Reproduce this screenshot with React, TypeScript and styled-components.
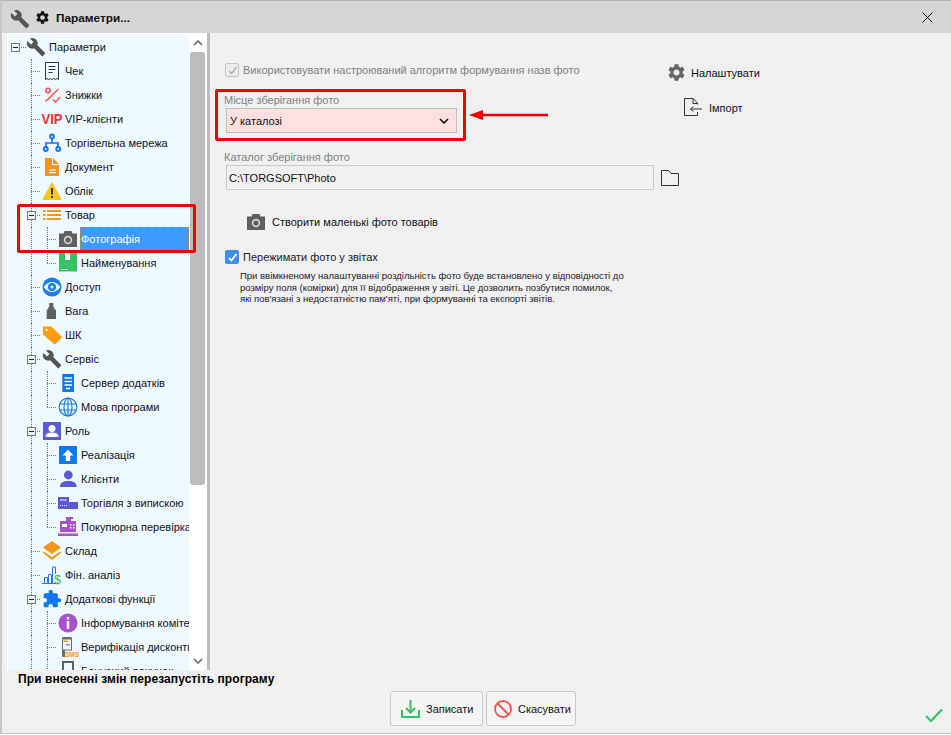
import React from "react";
import styled, { createGlobalStyle } from "styled-components";

const GlobalStyle = createGlobalStyle`
  html, body {
    margin: 0;
    padding: 0;
    background: #ffffff;
  }
  body {
    font-family: "Liberation Sans", Arial, sans-serif;
    font-size: 11px;
    color: #10101a;
  }
`;

const Window = styled.div`
  width: 951px;
  height: 734px;
  box-sizing: border-box;
  display: flex;
  flex-direction: column;
  background: #f0f0f0;
  border-top: 1px solid #b4b4b4;
  border-left: 2px solid #c8c8c8;
  border-bottom: 1px solid #c4c4c4;
`;

const TitleBar = styled.div`
  height: 32px;
  flex: none;
  box-sizing: border-box;
  display: flex;
  align-items: center;
  background: #d6d6d6;
  padding: 1px 18px 0 8px;
  font-weight: bold;
  font-size: 11.8px;
  color: #111;
`;

const TitleText = styled.span`
  margin-left: 7px;
  flex: 1;
`;

const TitleGap = styled.span`
  width: 6px;
`;

const WrenchMark = styled.svg`
  margin-top: 3px;
`;

const Body = styled.div`
  flex: 1;
  min-height: 0;
  display: flex;
`;

const TreePane = styled.div`
  width: 203px;
  margin-left: 5px;
  flex: none;
  display: flex;
  background: #ffffff;
  padding: 1px 0 0 1px;
  box-sizing: border-box;
  border-right: 3px solid #bcbcbc;
  position: relative;
`;

const TreeList = styled.div`
  flex: 1;
  min-width: 0;
  overflow: hidden;
  background: #eefaff;
  padding-top: 1px;
`;

const Row = styled.div<{ $level: number }>`
  height: 24px;
  display: flex;
  align-items: center;
  position: relative;
  white-space: nowrap;
  padding-left: ${(p) => [18, 34, 50][p.$level]}px;
`;

const VLine = styled.i<{ $x: number; $half?: boolean }>`
  position: absolute;
  left: ${(p) => p.$x}px;
  top: 0;
  height: ${(p) => (p.$half ? "12px" : "24px")};
  border-left: 1px dotted #777;
`;

const HLine = styled.i<{ $x: number }>`
  position: absolute;
  left: ${(p) => p.$x}px;
  top: 12px;
  width: 9px;
  border-top: 1px dotted #777;
`;

const Expander = styled.i<{ $x: number }>`
  position: absolute;
  left: ${(p) => p.$x}px;
  top: 8px;
  width: 9px;
  height: 9px;
  box-sizing: border-box;
  border: 1px solid #777;
  background: #f4f8f8;
  z-index: 1;
  &::after {
    content: "";
    position: absolute;
    left: 1px;
    right: 1px;
    top: 3px;
    height: 1px;
    background: #222;
  }
`;

const IconSlot = styled.span`
  width: 20px;
  height: 20px;
  flex: none;
  display: block;
  position: relative;
  z-index: 1;
  svg {
    display: block;
    overflow: visible;
  }
`;

const RowLabel = styled.span<{ $selected?: boolean }>`
  margin-left: 2px;
  flex: ${(p) => (p.$selected ? "1" : "none")};
  height: 24px;
  line-height: 24px;
  padding-left: 1px;
  box-sizing: border-box;
  ${(p) =>
    p.$selected
      ? `background: #3d9bff; color: #ffffff; outline: 1px dotted #c08040; outline-offset: -1px;`
      : ""}
`;

const ScrollBar = styled.div`
  width: 18px;
  flex: none;
  background: #ffffff;
  display: flex;
  flex-direction: column;
`;

const ScrollArrow = styled.div`
  height: 18px;
  flex: none;
  display: flex;
  align-items: center;
  justify-content: center;
`;

const ScrollTrack = styled.div`
  flex: 1;
  width: 100%;
  background: #ffffff;
`;

const ScrollThumb = styled.div`
  height: 433px;
  width: 15px;
  margin-left: 1px;
  background: #bcbcbc;
  border-radius: 3px;
`;

const Highlight = styled.div`
  position: absolute;
  box-sizing: border-box;
  border: 3px solid #f00000;
  border-radius: 2px;
  z-index: 3;
  pointer-events: none;
`;

const TreeHighlight = styled(Highlight)`
  left: 10px;
  top: 171px;
  width: 179px;
  height: 49px;
`;

const Main = styled.div`
  flex: 1;
  display: flex;
  padding: 27px 0 0 14px;
  min-width: 0;
`;

const FormColumn = styled.div`
  width: 444px;
  flex: none;
  display: flex;
  flex-direction: column;
  align-items: flex-start;
`;

const CheckRow = styled.label<{ $muted?: boolean }>`
  display: flex;
  align-items: center;
  height: 20px;
  margin-left: 1px;
  gap: 4px;
  white-space: nowrap;
  color: ${(p) => (p.$muted ? "#808080" : "#20202a")};
`;

const CheckBox = styled.span<{ $on?: boolean }>`
  width: 14px;
  height: 14px;
  box-sizing: border-box;
  border-radius: 2px;
  display: flex;
  align-items: center;
  justify-content: center;
  border: 1px solid ${(p) => (p.$on ? "#3d8fee" : "#c4c4c4")};
  background: ${(p) => (p.$on ? "#3d8fee" : "#ececec")};
`;

const SelectBlock = styled.div`
  position: relative;
  margin-top: 13px;
  width: 100%;
`;

const FieldLabel = styled.div`
  color: #808080;
  height: 15px;
  line-height: 15px;
`;

const SelectBox = styled.div`
  margin-left: 2px;
  width: 231px;
  height: 25px;
  box-sizing: border-box;
  border: 1px solid #bdbdbd;
  background: #ffe0e0;
  display: flex;
  align-items: center;
  justify-content: space-between;
  padding: 0 7px 0 3px;
  color: #111;
`;

const SelectHighlight = styled(Highlight)`
  left: -9px;
  top: -4px;
  width: 251px;
  height: 52px;
`;

const PointerArrow = styled.svg`
  position: absolute;
  left: 245px;
  top: 16px;
`;

const PathBlock = styled.div`
  margin-top: 17px;
  width: 457px;
`;

const PathRow = styled.div`
  display: flex;
  align-items: center;
  margin-left: 2px;
  gap: 7px;
`;

const PathInput = styled.div`
  width: 428px;
  height: 25px;
  flex: none;
  box-sizing: border-box;
  border: 1px solid #c8c8c8;
  background: #f0f0f0;
  display: flex;
  align-items: center;
  padding-left: 2px;
  color: #111;
`;

const ThumbButton = styled.div`
  margin: 20px 0 0 22px;
  height: 24px;
  display: flex;
  align-items: center;
  gap: 6px;
`;

const CompressRow = styled(CheckRow)`
  margin-top: 13px;
`;

const Hint = styled.p`
  margin: 3px 0 0 16px;
  font-size: 9.5px;
  line-height: 11.5px;
  white-space: nowrap;
  color: #20202a;
`;

const SideColumn = styled.div`
  display: flex;
  flex-direction: column;
  margin-top: -5px;
`;

const SideButton = styled.div<{ $indent: number }>`
  height: 35px;
  display: flex;
  align-items: center;
  gap: 6px;
  padding-left: ${(p) => p.$indent}px;
`;

const Footer = styled.div`
  height: 63px;
  flex: none;
  display: flex;
  flex-direction: column;
`;

const Notice = styled.div`
  font-weight: bold;
  color: #000;
  font-size: 12px;
  letter-spacing: 0.07px;
  margin: 2px 0 0 16px;
  height: 15px;
  line-height: 15px;
`;

const ButtonRow = styled.div`
  display: flex;
  gap: 3px;
  padding: 4px 8px 0 388px;
  align-items: flex-start;
`;

const ActionButton = styled.div<{ $w: number; $pad: number; $gap: number }>`
  width: ${(p) => p.$w}px;
  height: 35px;
  box-sizing: border-box;
  border: 1px solid #c8c8c8;
  border-radius: 3px;
  background: #f4f4f4;
  display: flex;
  align-items: center;
  padding-left: ${(p) => p.$pad}px;
  gap: ${(p) => p.$gap}px;
  white-space: nowrap;
  svg {
    flex: none;
  }
`;

const DoneMark = styled.svg`
  margin: 17px 0 0 auto;
`;

const wrench =
  "M22.7 19l-9.1-9.1c.9-2.3.4-5-1.5-6.9-2-2-5-2.4-7.4-1.3L9 6 6 9 1.6 4.7C.4 7.1.9 10.1 2.9 12.1c1.9 1.9 4.6 2.4 6.9 1.5l9.1 9.1c.4.4 1 .4 1.4 0l2.3-2.3c.5-.4.5-1.1.1-1.4z";
const gear =
  "M19.14 12.94c.04-.3.06-.61.06-.94 0-.32-.02-.64-.07-.94l2.03-1.58c.18-.14.23-.41.12-.61l-1.92-3.32c-.12-.22-.37-.29-.59-.22l-2.39.96c-.5-.38-1.03-.7-1.62-.94l-.36-2.54c-.04-.24-.24-.41-.48-.41h-3.84c-.24 0-.43.17-.47.41l-.36 2.54c-.59.24-1.13.57-1.62.94l-2.39-.96c-.22-.08-.47 0-.59.22L2.74 8.87c-.12.21-.08.47.12.61l2.03 1.58c-.05.3-.09.63-.09.94s.02.64.07.94l-2.03 1.58c-.18.14-.23.41-.12.61l1.92 3.32c.12.22.37.29.59.22l2.39-.96c.5.38 1.03.7 1.62.94l.36 2.54c.05.24.24.41.48.41h3.84c.24 0 .44-.17.47-.41l.36-2.54c.59-.24 1.13-.56 1.62-.94l2.39.96c.22.08.47 0 .59-.22l1.92-3.32c.12-.22.07-.47-.12-.61l-2.01-1.58zM12 15.6c-1.98 0-3.6-1.62-3.6-3.6s1.62-3.6 3.6-3.6 3.6 1.62 3.6 3.6-1.62 3.6-3.6 3.6z";
const puzzle =
  "M20.5 11H19V7c0-1.1-.9-2-2-2h-4V3.5C13 2.12 11.88 1 10.5 1S8 2.12 8 3.5V5H4c-1.1 0-1.99.9-1.99 2v3.8H3.5c1.49 0 2.7 1.21 2.7 2.7s-1.21 2.7-2.7 2.7H2V20c0 1.1.9 2 2 2h3.8v-1.5c0-1.49 1.21-2.7 2.7-2.7 1.49 0 2.7 1.21 2.7 2.7V22H17c1.1 0 2-.9 2-2v-4h1.5c1.38 0 2.5-1.12 2.5-2.5S21.88 11 20.5 11z";

const cameraIcon = (
  <svg width="20" height="20" viewBox="0 0 20 20">
    <path fill="#5f5f5f" d="M1 4.5h4.5l1-2.5h7l1 2.5H19V18H1z" />
    <circle cx="10" cy="11" r="4.2" fill="#d8d8d8" />
    <circle cx="10" cy="11" r="2.6" fill="#5f5f5f" />
  </svg>
);

const icons = {
  wrench: (
    <svg width="20" height="20" viewBox="0 0 24 24">
      <path fill="#555" d={wrench} />
    </svg>
  ),
  receipt: (
    <svg width="20" height="20" viewBox="0 0 20 20" fill="none" stroke="#333" strokeWidth="1">
      <path d="M3.5 1.5h13v17l-1.6-1-1.7 1-1.6-1-1.6 1-1.6-1-1.7 1-1.6-1-1.6 1z" />
      <path d="M6.5 5.5h7M6.5 8.5h7M6.5 11.5h4" />
    </svg>
  ),
  percent: (
    <svg width="20" height="20" viewBox="0 0 20 20" fill="none" stroke="#ff5050" strokeWidth="1.5">
      <path d="M3.5 16.5L16.5 4" />
      <circle cx="6" cy="5.5" r="2.2" />
      <path d="M11 14.5l2.5 2.5L18 12" />
    </svg>
  ),
  vip: (
    <svg width="20" height="20" viewBox="0 0 20 20">
      <text x="10" y="15.3" textAnchor="middle" fontFamily="Liberation Sans, sans-serif" fontWeight="bold" fontSize="15" textLength="21" lengthAdjust="spacingAndGlyphs" fill="#ee2f2f">
        VIP
      </text>
    </svg>
  ),
  network: (
    <svg width="20" height="20" viewBox="0 0 20 20" fill="none" stroke="#1573f0" strokeWidth="2">
      <path d="M10 5v5M4 14v-4h12v4" strokeWidth="1.7" />
      <circle cx="10" cy="3.5" r="1.9" />
      <circle cx="3.8" cy="16" r="1.9" />
      <circle cx="16.2" cy="16" r="1.9" />
    </svg>
  ),
  doc: (
    <svg width="20" height="20" viewBox="0 0 20 20">
      <path fill="#f7941d" d="M3 1h7v7h7v11H3z" />
      <path fill="#f7941d" d="M11 1l6 6h-6z" />
      <path stroke="#fff" strokeWidth="1" d="M7 13h7M7 15.7h7" />
    </svg>
  ),
  warning: (
    <svg width="20" height="20" viewBox="0 0 20 20">
      <path fill="#ffc61a" d="M10 1l10 18H0z" />
      <path fill="#333" d="M9 7h2v6.5H9zM9 15h2v2H9z" />
    </svg>
  ),
  list: (
    <svg width="20" height="20" viewBox="0 0 20 20" fill="#f7941d">
      <path d="M1 5h2.5v2H1zM5 5h14v2H5zM1 9h2.5v2H1zM5 9h14v2H5zM1 13h2.5v2H1zM5 13h14v2H5z" />
    </svg>
  ),
  camera: cameraIcon,
  box: (
    <svg width="20" height="20" viewBox="0 0 20 20">
      <path fill="#35c263" d="M1 0h18v18.5H1z" />
      <path fill="#fff" d="M7 0h5v7H7zM3.5 16h6v1h-6z" />
    </svg>
  ),
  eye: (
    <svg width="20" height="20" viewBox="0 0 20 20">
      <circle cx="10" cy="10" r="9.5" fill="#1a7de8" />
      <path fill="#eefaff" d="M1.8 10C4 6.5 7 5 10 5s6 1.5 8.2 5C16 13.5 13 15 10 15s-6-1.5-8.2-5z" />
      <circle cx="10" cy="10" r="4" fill="#1a7de8" />
      <circle cx="10" cy="10" r="1.5" fill="#eefaff" />
    </svg>
  ),
  weight: (
    <svg width="20" height="20" viewBox="0 0 20 20" fill="#5f5f5f">
      <path d="M7.3 2h4v4h1v2.5H14V18H4.700V8.5h1.600V6h1z" />
    </svg>
  ),
  tag: (
    <svg width="20" height="20" viewBox="0 0 20 20">
      <path fill="#ff9c0f" d="M1 1.5h8.500l10 10q.5.7 0 1.5l-6 6q-.8.5-1.5 0L1 9.5z" />
      <circle cx="4.5" cy="5" r="1.2" fill="#eefaff" />
    </svg>
  ),
  server: (
    <svg width="20" height="20" viewBox="0 0 20 20">
      <path fill="#0f78f0" d="M4.3 1H16v18H4.3z" />
      <path stroke="#fff" strokeWidth="1.3" d="M6.5 5h7.5M6.5 8.5h7.500M6.5 12h7.500M8 15.5h4" />
    </svg>
  ),
  globe: (
    <svg width="20" height="20" viewBox="0 0 20 20" fill="none" stroke="#1a7de8" strokeWidth="1.2">
      <circle cx="10" cy="10" r="8.8" />
      <ellipse cx="10" cy="10" rx="4" ry="8.8" />
      <path d="M10 1v18M1.5 7h17M1.5 13h17" />
    </svg>
  ),
  role: (
    <svg width="20" height="20" viewBox="0 0 20 20">
      <path fill="#5a5ad6" d="M1 1h18v18H1z" />
      <circle cx="10" cy="7.5" r="3.5" fill="#fff" />
      <path fill="#fff" d="M3.5 16c0-3.5 3-4.5 6.5-4.5s6.500 1 6.500 4.500z" />
    </svg>
  ),
  sale: (
    <svg width="20" height="20" viewBox="0 0 20 20">
      <path fill="#0f78f0" d="M1 1h18v18H1z" />
      <path fill="#fff" d="M10 4.5l5.5 6h-3.3V16H7.8v-5.500H4.500z" />
    </svg>
  ),
  user: (
    <svg width="20" height="20" viewBox="0 0 20 20" fill="#5a5ad6">
      <circle cx="10.3" cy="6" r="4.4" />
      <path d="M2 18c0-4.5 3.5-6 8.3-6s8.400 1.500 8.400 6z" />
    </svg>
  ),
  invoice: (
    <svg width="20" height="20" viewBox="0 0 20 20">
      <path fill="#5a5ad6" d="M0 4h11v5h9v7H0z" />
      <path stroke="#fff" strokeWidth="1" d="M2 7h6.5" />
      <path stroke="#fff" strokeWidth="1" strokeDasharray="1 1" d="M2 12.5h8" />
    </svg>
  ),
  register: (
    <svg width="20" height="20" viewBox="0 0 20 20">
      <path fill="#a94fd0" d="M8 0h7v2h-2v2h5v11H2V4h6zM0 16.5h20V19H0z" />
      <path fill="#fff" d="M4 7h5v3H4zM12 7h1.5v1.5H12zM15 7h1.5v1.5H15zM12 10h1.5v1.5H12zM15 10h1.5v1.5H15z" />
    </svg>
  ),
  layers: (
    <svg width="20" height="20" viewBox="0 0 20 20" fill="#f7941d">
      <path d="M10 0l9 6.5L10 13 1 6.5z" />
      <path d="M2 10.5l8 5.8 8-5.8 1 1.5-9 7-9-7z" />
    </svg>
  ),
  chart: (
    <svg width="20" height="20" viewBox="0 0 20 20" fill="none" stroke="#1a7de8" strokeWidth="1">
      <path d="M0 18.5h14M2.5 18.5v-6h3v6M6.5 18.5v-9h3v9M10.5 18.5V2h3v7" />
      <text x="15.5" y="19" textAnchor="middle" fontFamily="Liberation Sans, sans-serif" fontSize="12" fill="#2fb86a" stroke="none">
        $
      </text>
    </svg>
  ),
  puzzle: (
    <svg width="20" height="20" viewBox="0 0 24 24">
      <path fill="#0f78f0" d={puzzle} />
    </svg>
  ),
  info: (
    <svg width="20" height="20" viewBox="0 0 20 20">
      <circle cx="10" cy="10" r="9.5" fill="#a94fd0" />
      <path fill="#fff" d="M8.7 4h2.6v2.6H8.7zM8.7 8h2.6v8H8.7z" />
    </svg>
  ),
  sms: (
    <svg width="20" height="20" viewBox="0 0 20 20">
      <rect x="4" y="0" width="10" height="20" rx="1.5" fill="#6a6a6a" />
      <path fill="#eefaff" d="M5 2.500h8v10H5z" />
      <path fill="#f7941d" d="M5.500 3.500h4.500V5H5.500z" />
      <path fill="#999" d="M7.500 7h4.500v1.500H7.500z" />
      <rect x="7" y="13.5" width="14" height="6.5" fill="#eefaff" />
      <text x="14" y="19.8" textAnchor="middle" fontFamily="Liberation Sans, sans-serif" fontWeight="bold" fontSize="7.5" textLength="14" lengthAdjust="spacingAndGlyphs" fill="#f7941d">
        SMS
      </text>
    </svg>
  ),
  monitor: (
    <svg width="20" height="20" viewBox="0 0 20 20" fill="none" stroke="#5f5f5f" strokeWidth="2">
      <path d="M5 1h10v12H5z" />
    </svg>
  ),
};

type IconName = keyof typeof icons;

type TreeNode = {
  label: string;
  icon: IconName;
  level: number;
  open?: boolean;
  selected?: boolean;
  last?: boolean;
};

const tree: TreeNode[] = [
  { label: "Параметри", icon: "wrench", level: 0, open: true },
  { label: "Чек", icon: "receipt", level: 1 },
  { label: "Знижки", icon: "percent", level: 1 },
  { label: "VIP-клієнти", icon: "vip", level: 1 },
  { label: "Торгівельна мережа", icon: "network", level: 1 },
  { label: "Документ", icon: "doc", level: 1 },
  { label: "Облік", icon: "warning", level: 1 },
  { label: "Товар", icon: "list", level: 1, open: true },
  { label: "Фотографія", icon: "camera", level: 2, selected: true },
  { label: "Найменування", icon: "box", level: 2, last: true },
  { label: "Доступ", icon: "eye", level: 1 },
  { label: "Вага", icon: "weight", level: 1 },
  { label: "ШК", icon: "tag", level: 1 },
  { label: "Сервіс", icon: "wrench", level: 1, open: true },
  { label: "Сервер додатків", icon: "server", level: 2 },
  { label: "Мова програми", icon: "globe", level: 2, last: true },
  { label: "Роль", icon: "role", level: 1, open: true },
  { label: "Реалізація", icon: "sale", level: 2 },
  { label: "Клієнти", icon: "user", level: 2 },
  { label: "Торгівля з випискою", icon: "invoice", level: 2 },
  { label: "Покупюрна перевірка", icon: "register", level: 2, last: true },
  { label: "Склад", icon: "layers", level: 1 },
  { label: "Фін. аналіз", icon: "chart", level: 1 },
  { label: "Додаткові функції", icon: "puzzle", level: 1, open: true },
  { label: "Інформування комітента", icon: "info", level: 2 },
  { label: "Верифікація дисконтних карт", icon: "sms", level: 2 },
  { label: "Бонусний рахунок", icon: "monitor", level: 2 },
];

const OUTER_LINE = 23;
const INNER_LINE = 39;

function TreeRow({ node }: { node: TreeNode }) {
  const x = node.level === 2 ? INNER_LINE : OUTER_LINE;
  return (
    <Row $level={node.level}>
      {node.level > 0 && <VLine $x={OUTER_LINE} />}
      {node.level === 2 && <VLine $x={INNER_LINE} $half={node.last} />}
      {node.level > 0 ? <HLine $x={x} /> : <HLine $x={9} />}
      {node.open && <Expander $x={node.level === 0 ? 3 : x - 4} />}
      <IconSlot>{icons[node.icon]}</IconSlot>
      <RowLabel $selected={node.selected}>{node.label}</RowLabel>
    </Row>
  );
}

function Chevron({ up }: { up?: boolean }) {
  return (
    <svg width="10" height="6" viewBox="0 0 10 6" fill="none" stroke="#666" strokeWidth="1.6">
      <path d={up ? "M1 5l4-4 4 4" : "M1 1l4 4 4-4"} />
    </svg>
  );
}

export default function App() {
  return (
    <>
      <GlobalStyle />
      <Window>
        <TitleBar>
          <WrenchMark width="20" height="20" viewBox="0 0 24 24">
            <path fill="#555" d={wrench} />
          </WrenchMark>
          <TitleGap />
          <svg width="13" height="13" viewBox="2 2 20 20">
            <path fill="#111" d={gear} />
          </svg>
          <TitleText>Параметри...</TitleText>
          <svg width="11" height="11" viewBox="0 0 11 11" stroke="#111" strokeWidth="1">
            <path d="M.5.5l10 10M10.5.5l-10 10" />
          </svg>
        </TitleBar>
        <Body>
          <TreePane>
            <TreeList>
              {tree.map((n) => (
                <TreeRow key={n.label} node={n} />
              ))}
            </TreeList>
            <ScrollBar>
              <ScrollArrow>
                <Chevron up />
              </ScrollArrow>
              <ScrollTrack>
                <ScrollThumb />
              </ScrollTrack>
              <ScrollArrow>
                <Chevron />
              </ScrollArrow>
            </ScrollBar>
            <TreeHighlight />
          </TreePane>
          <Main>
            <FormColumn>
              <CheckRow $muted>
                <CheckBox>
                  <svg width="11" height="11" viewBox="0 0 11 11" fill="none" stroke="#b4b4b4" strokeWidth="1.5">
                    <path d="M2 6l2.5 2.5L9.5 2" />
                  </svg>
                </CheckBox>
                Використовувати настроюваний алгоритм формування назв фото
              </CheckRow>
              <SelectBlock>
                <FieldLabel>Місце зберігання фото</FieldLabel>
                <SelectBox>
                  У каталозі
                  <svg width="10" height="6" viewBox="0 0 10 6" fill="none" stroke="#111" strokeWidth="1.6">
                    <path d="M1 1l4 4 4-4" />
                  </svg>
                </SelectBox>
                <SelectHighlight />
                <PointerArrow width="80" height="12" viewBox="0 0 80 12">
                  <path fill="#f00000" d="M0 6l14-5v3.8h65v2.400H14V11z" />
                </PointerArrow>
              </SelectBlock>
              <PathBlock>
                <FieldLabel>Каталог зберігання фото</FieldLabel>
                <PathRow>
                  <PathInput>C:\TORGSOFT\Photo</PathInput>
                  <svg width="18" height="16" viewBox="0 0 18 16" fill="none" stroke="#333" strokeWidth="1">
                    <path d="M.5 15.5V.5h7l2.5 3h7.500v12z" />
                  </svg>
                </PathRow>
              </PathBlock>
              <ThumbButton>
                <IconSlot>{cameraIcon}</IconSlot>
                Створити маленькі фото товарів
              </ThumbButton>
              <CompressRow>
                <CheckBox $on>
                  <svg width="11" height="11" viewBox="0 0 11 11" fill="none" stroke="#fff" strokeWidth="1.8">
                    <path d="M2 6l2.5 2.5L9.5 2" />
                  </svg>
                </CheckBox>
                Пережимати фото у звітах
              </CompressRow>
              <Hint>
                При ввімкненому налаштуванні роздільність фото буде встановлено у відповідності до
                <br />
                розміру поля (комірки) для її відображення у звіті. Це дозволить позбутися помилок,
                <br />
                які пов'язані з недостатністю пам'яті, при формуванні та експорті звітів.
              </Hint>
            </FormColumn>
            <SideColumn>
              <SideButton $indent={0}>
                <svg width="17" height="17" viewBox="2 2 20 20">
                  <path fill="#666" d={gear} />
                </svg>
                Налаштувати
              </SideButton>
              <SideButton $indent={16}>
                <svg width="19" height="19" viewBox="0 0 19 19" fill="none" stroke="#333" strokeWidth="1">
                  <path d="M13.5 6.5V5L9 .5H.5v17h13V14M9 .5v5h4.500M18 11H6.500M6.500 11l3-2.500M6.500 11l3 2.500" />
                </svg>
                Імпорт
              </SideButton>
            </SideColumn>
          </Main>
        </Body>
        <Footer>
          <Notice>При внесенні змін перезапустіть програму</Notice>
          <ButtonRow>
            <ActionButton $w={93} $pad={10} $gap={6}>
              <svg width="19" height="19" viewBox="0 0 19 19" fill="none" stroke="#35c263" strokeWidth="2">
                <path d="M1 11v7h17v-7M9.5 1v12M5 9l4.500 4.500L14 9" />
              </svg>
              Записати
            </ActionButton>
            <ActionButton $w={90} $pad={6} $gap={5}>
              <svg width="20" height="20" viewBox="0 0 20 20" fill="none" stroke="#ff5050" strokeWidth="1.8">
                <circle cx="10" cy="10" r="8" />
                <path d="M4.5 4.5l11 11" />
              </svg>
              Скасувати
            </ActionButton>
            <DoneMark width="18" height="15" viewBox="0 0 18 15" fill="none" stroke="#35c263" strokeWidth="2.2">
              <path d="M1 8l5 5L17 1.5" />
            </DoneMark>
          </ButtonRow>
        </Footer>
      </Window>
    </>
  );
}
